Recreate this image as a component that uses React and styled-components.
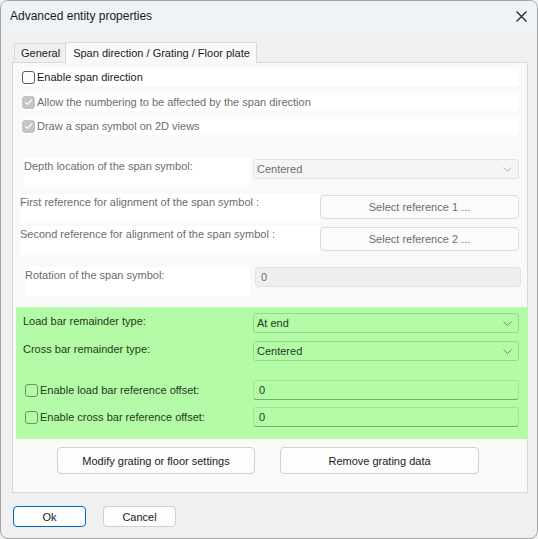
import React from 'react';
import styled, { createGlobalStyle, css } from 'styled-components';

const GlobalStyle = createGlobalStyle`
  html, body {
    margin: 0;
    padding: 0;
    background: #f0f0f0;
  }
  body {
    font-family: "Liberation Sans", Arial, sans-serif;
    font-size: 11px;
    color: #1b1b1b;
  }
`;

const GREEN = '#b4fba7';

const Window = styled.div`
  box-sizing: border-box;
  width: 538px;
  height: 539px;
  border: 1px solid #a3a3a3;
  border-radius: 8px;
  background: #f0f0f0;
  overflow: hidden;
  display: flex;
  flex-direction: column;
`;

const TitleBar = styled.div`
  height: 30px;
  flex: none;
  background: #eef3f8;
  display: flex;
  align-items: center;
  justify-content: space-between;
  padding: 0 9px 0 9px;
`;

const Title = styled.span`
  font-size: 12px;
  color: #1a1a1a;
`;

const CloseButton = styled.span`
  width: 14px;
  height: 14px;
  display: flex;
  align-items: center;
  justify-content: center;
`;

const Body = styled.div`
  padding: 11px 9px 0 11px;
  display: flex;
  flex-direction: column;
`;

const TabStrip = styled.div`
  display: flex;
  align-items: flex-end;
  height: 20px;
  padding-left: 2px;
`;

const Tab = styled.div`
  box-sizing: border-box;
  height: ${(p) => (p.$active ? '21px' : '19px')};
  padding: ${(p) => (p.$active ? '0 6px 0 7px' : '0 5px 0 6px')};
  display: flex;
  align-items: center;
  border: 1px solid #d9d9d9;
  border-bottom: none;
  background: ${(p) => (p.$active ? '#f9f9f9' : '#f0f0f0')};
  color: #1a1a1a;
  margin-bottom: ${(p) => (p.$active ? '-1px' : '0')};
  position: relative;
  z-index: ${(p) => (p.$active ? 1 : 0)};
  ${(p) => !p.$active && css`border-right: none;`}
`;

const Panel = styled.div`
  box-sizing: border-box;
  height: 431px;
  border: 1px solid #d9d9d9;
  background: #f9f9f9;
  display: flex;
  flex-direction: column;
`;

const CheckRow = styled.label`
  box-sizing: border-box;
  margin: ${(p) => p.$mt}px 0 0 9px;
  width: 497px;
  height: 18px;
  background: #ffffff;
  display: flex;
  align-items: center;
  gap: 2px;
  color: ${(p) => (p.$disabled ? '#6d6d6d' : '#1b1b1b')};
`;

const Box = styled.span`
  box-sizing: border-box;
  width: 13px;
  height: 13px;
  border-radius: 3px;
  flex: none;
  display: flex;
  align-items: center;
  justify-content: center;
  ${(p) =>
    p.$checked
      ? css`background: #c4c4c4; border: 1px solid #c4c4c4;`
      : css`border: 1px solid ${p.$green ? '#5f9c57' : '#5a5a5a'}; background: ${p.$green ? 'transparent' : '#fdfdfd'};`}
`;

const FieldRow = styled.div`
  display: flex;
  align-items: flex-start;
  margin: ${(p) => p.$mt}px 0 0 ${(p) => p.$ml}px;
  gap: ${(p) => p.$gap || 0}px;
`;

const LabelBox = styled.div`
  box-sizing: border-box;
  width: ${(p) => p.$w}px;
  height: 29px;
  background: #ffffff;
  color: #6d6d6d;
  line-height: 16px;
  white-space: nowrap;
  overflow: hidden;
`;

const Combo = styled.div`
  box-sizing: border-box;
  width: ${(p) => p.$w}px;
  height: 20px;
  margin-top: ${(p) => p.$mt || 0}px;
  border-radius: 3px;
  display: flex;
  align-items: center;
  justify-content: space-between;
  padding: 0 6px 0 3px;
  ${(p) =>
    p.$green
      ? css`border: 1px solid #93d986; background: ${GREEN}; color: #213a1f;`
      : css`border: 1px solid #e3e3e3; background: #f5f5f5; color: #6d6d6d;`}
`;

const TextInput = styled.div`
  box-sizing: border-box;
  width: ${(p) => p.$w}px;
  height: 20px;
  border-radius: 3px;
  display: flex;
  align-items: center;
  padding: 0 5px;
  ${(p) =>
    p.$green
      ? css`border: 1px solid #a3e297; border-bottom-color: #6fb265; background: ${GREEN}; color: #213a1f;`
      : css`border: 1px solid #e4e4e4; background: #efefef; color: #6d6d6d;`}
`;

const RefButton = styled.div`
  box-sizing: border-box;
  width: 199px;
  height: 24px;
  margin-top: 1px;
  border: 1px solid #dcdcdc;
  border-radius: 4px;
  background: #fbfbfb;
  color: #6d6d6d;
  display: flex;
  align-items: center;
  justify-content: center;
`;

const GreenSection = styled.div`
  margin: 11px 0 0 3px;
  width: 512px;
  height: 132px;
  background: ${GREEN};
  box-sizing: border-box;
  padding: 6px 0 0 7px;
  display: flex;
  flex-direction: column;
  color: #223a20;
`;

const GreenRow = styled.div`
  display: flex;
  align-items: ${(p) => (p.$center ? 'center' : 'flex-start')};
  margin-top: ${(p) => p.$mt || 0}px;
  height: 20px;
`;

const GreenLabel = styled.div`
  width: 230px;
  line-height: 16px;
  display: flex;
  align-items: center;
  gap: 2px;
  padding-left: ${(p) => p.$pl || 0}px;
  box-sizing: border-box;
`;

const ActionRow = styled.div`
  display: flex;
  gap: 25px;
  margin: 8px 0 0 44px;
`;

const Button = styled.button`
  box-sizing: border-box;
  width: ${(p) => p.$w}px;
  height: ${(p) => p.$h}px;
  border: 1px solid ${(p) => (p.$default ? '#0067c0' : '#d0d0d0')};
  border-radius: 4px;
  background: #fdfdfd;
  font-family: inherit;
  font-size: 11px;
  color: #1a1a1a;
  padding: 0;
`;

const Footer = styled.div`
  display: flex;
  gap: 17px;
  padding: 13px 0 0 1px;
`;

const Chevron = ({ color }) => (
  <svg width="9" height="5" viewBox="0 0 9 5">
    <path d="M0.5 0.5 L4.5 4.5 L8.5 0.5" fill="none" stroke={color} strokeWidth="1" />
  </svg>
);

const Tick = () => (
  <svg width="9" height="8" viewBox="0 0 9 8">
    <path d="M1 4.2 L3.4 6.4 L8 1.4" fill="none" stroke="#ffffff" strokeWidth="1.2" />
  </svg>
);

export default function App() {
  return (
    <>
      <GlobalStyle />
      <Window>
        <TitleBar>
          <Title>Advanced entity properties</Title>
          <CloseButton>
            <svg width="11" height="11" viewBox="0 0 11 11">
              <path d="M0.5 0.5 L10.5 10.5 M10.5 0.5 L0.5 10.5" stroke="#1a1a1a" strokeWidth="1.1" />
            </svg>
          </CloseButton>
        </TitleBar>
        <Body>
          <TabStrip>
            <Tab>General</Tab>
            <Tab $active>Span direction / Grating / Floor plate</Tab>
          </TabStrip>
          <Panel>
            <CheckRow $mt={5}>
              <Box />
              Enable span direction
            </CheckRow>
            <CheckRow $mt={7} $disabled>
              <Box $checked><Tick /></Box>
              Allow the numbering to be affected by the span direction
            </CheckRow>
            <CheckRow $mt={6} $disabled>
              <Box $checked><Tick /></Box>
              Draw a span symbol on 2D views
            </CheckRow>

            <FieldRow $mt={23} $ml={11} $gap={4}>
              <LabelBox $w={225}>Depth location of the span symbol:</LabelBox>
              <Combo $w={266} $mt={1}>
                Centered
                <Chevron color="#b5b5b5" />
              </Combo>
            </FieldRow>
            <FieldRow $mt={7} $ml={7}>
              <LabelBox $w={300}>First reference for alignment of the span symbol :</LabelBox>
              <RefButton>Select reference 1 ...</RefButton>
            </FieldRow>
            <FieldRow $mt={3} $ml={7}>
              <LabelBox $w={300}>Second reference for alignment of the span symbol :</LabelBox>
              <RefButton>Select reference 2 ...</RefButton>
            </FieldRow>
            <FieldRow $mt={12} $ml={12} $gap={5}>
              <LabelBox $w={225}>Rotation of the span symbol:</LabelBox>
              <TextInput $w={266}>0</TextInput>
            </FieldRow>

            <GreenSection>
              <GreenRow>
                <GreenLabel>Load bar remainder type:</GreenLabel>
                <Combo $w={266} $green>
                  At end
                  <Chevron color="#5c9c53" />
                </Combo>
              </GreenRow>
              <GreenRow $mt={8}>
                <GreenLabel>Cross bar remainder type:</GreenLabel>
                <Combo $w={266} $green>
                  Centered
                  <Chevron color="#5c9c53" />
                </Combo>
              </GreenRow>
              <GreenRow $mt={19} $center>
                <GreenLabel $pl={2}>
                  <Box $green />
                  Enable load bar reference offset:
                </GreenLabel>
                <TextInput $w={266} $green>0</TextInput>
              </GreenRow>
              <GreenRow $mt={7} $center>
                <GreenLabel $pl={2}>
                  <Box $green />
                  Enable cross bar reference offset:
                </GreenLabel>
                <TextInput $w={266} $green>0</TextInput>
              </GreenRow>
            </GreenSection>

            <ActionRow>
              <Button $w={198} $h={27}>Modify grating or floor settings</Button>
              <Button $w={199} $h={27}>Remove grating data</Button>
            </ActionRow>
          </Panel>
          <Footer>
            <Button $w={73} $h={21} $default>Ok</Button>
            <Button $w={73} $h={21}>Cancel</Button>
          </Footer>
        </Body>
      </Window>
    </>
  );
}
